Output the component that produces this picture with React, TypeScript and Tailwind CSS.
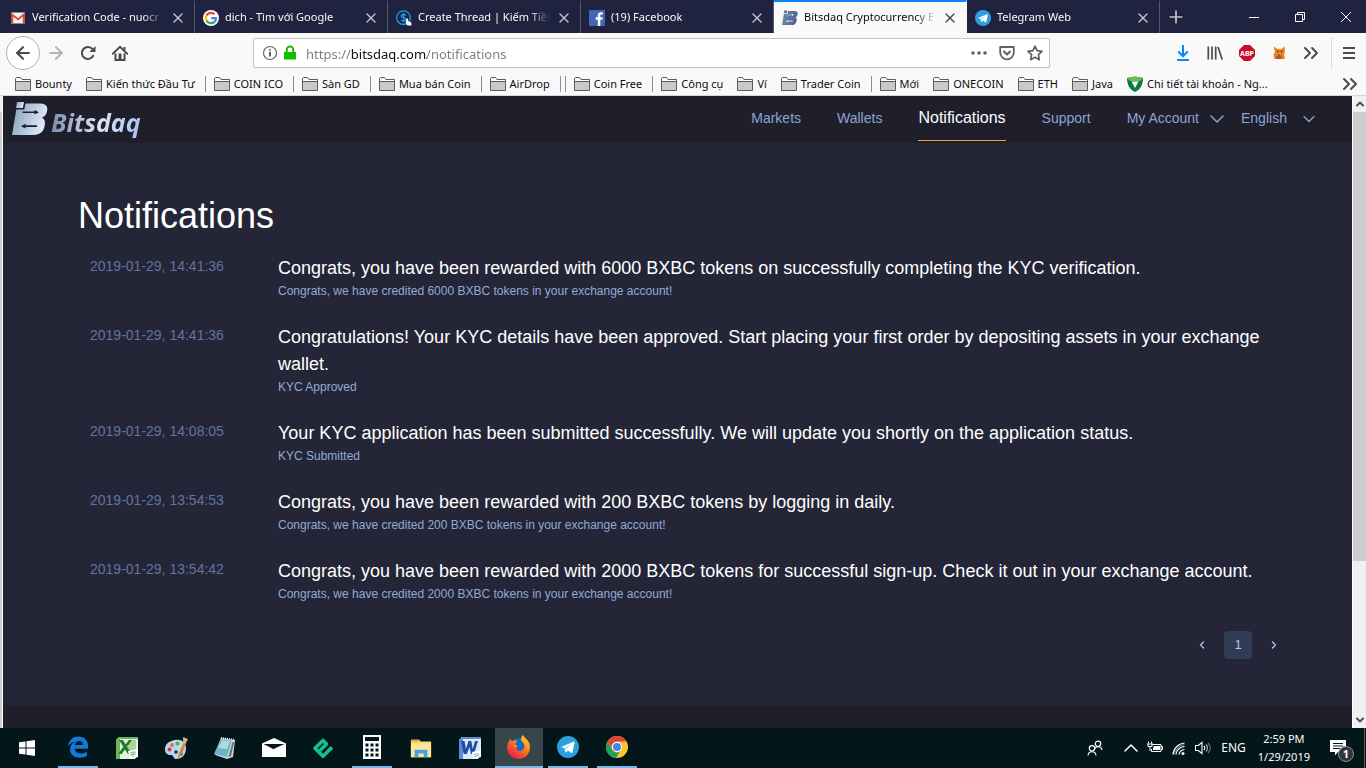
import type { ReactNode } from "react";
import { ArrowLeft, ArrowRight, ChevronDown, ChevronLeft, ChevronRight, ChevronUp, ChevronsRight, Plus, X } from "lucide-react";

const UI_FONT = "font-['Noto_Sans','Open_Sans',sans-serif]";
const PAGE_FONT = "font-['Liberation_Sans',Arial,sans-serif]";

/* ---------- Favicons ---------- */

function GmailIcon() {
  return (
    <svg viewBox="0 0 16 16" className="size-4">
      <path d="M1 2.5h14v11H1z" fill="#f2f2f2" />
      <path d="M1 13.5v-11L8 8l7-5.5v11h-2.2V6.6L8 10.4 3.2 6.6v6.9z" fill="#d54b3d" />
    </svg>
  );
}

function GoogleIcon() {
  return (
    <svg viewBox="0 0 16 16" className="size-4">
      <circle cx="8" cy="8" r="8" fill="#fff" />
      <g fill="none" strokeWidth="2.2">
        <path d="M11.6 4.3A5.1 5.1 0 0 0 3.5 5.6" stroke="#ea4335" />
        <path d="M3.5 5.6a5.1 5.1 0 0 0 0 4.8" stroke="#fbbc05" />
        <path d="M3.5 10.4a5.1 5.1 0 0 0 7.9 1.5" stroke="#34a853" />
        <path d="M11.4 11.9A5 5 0 0 0 13 8.1H8.2" stroke="#4285f4" />
      </g>
    </svg>
  );
}

function DollarIcon() {
  return (
    <svg viewBox="0 0 16 16" className="size-4">
      <circle cx="7.5" cy="7.7" r="6.8" fill="none" stroke="#1c9be6" strokeWidth="1.3" />
      <path d="M10 5.4C9 4.2 5.2 4 5.2 6c0 2.2 4.8 1.2 4.8 3.5 0 2-3.8 2-5 .4M7.6 3v9.4" fill="none" stroke="#1c9be6" strokeWidth="1.3" />
      <path d="M10.5 8.5l1.3 0 .6 3 2.8.8.3 3.2h-4l-1.800-2.500z" fill="#fff" />
    </svg>
  );
}

function FacebookIcon() {
  return (
    <svg viewBox="0 0 16 16" className="size-4">
      <path d="M0 0h16v16H0z" fill="#4267b2" />
      <path d="M8.8 16V9.8H6.7V7.3h2.1V5.5c0-2 1.2-3.2 3-3.2h1.9v2.3h-1.2c-1 0-1.2.5-1.2 1.2v1.5h2.4l-.4 2.5h-2V16z" fill="#fff" />
    </svg>
  );
}

function BitsdaqMark({ className, dark }: { className: string; dark?: boolean }) {
  return (
    <svg viewBox="0 0 36 34" className={className}>
      <defs>
        <linearGradient id={dark ? "mark-dark" : "mark-light"} x1="0" y1="0" x2="1" y2="0.3">
          <stop offset="0" stopColor={dark ? "#6f8fae" : "#7fa0b4"} />
          <stop offset="1" stopColor={dark ? "#4d6390" : "#dfe8fb"} />
        </linearGradient>
      </defs>
      <g fill={dark ? "url(#mark-dark)" : "url(#mark-light)"}>
        <path d="M5 0h7l-1.2 6H4z" />
        <path d="M13.5 1.5h15c5 0 7.5 3 6.7 7-.6 3.5-2.2 6-5.2 7 2.500 1.200 3.500 4 2.700 8-1 6-4.700 9.500-11.200 9.500H0L4.300 7.500h8z" />
      </g>
      <path d="M10.500 9.500h12V8l4.500 2.300-4.500 2.200V11h-12z" fill={dark ? "#f9f9fa" : "#1e1f2b"} />
      <path d="M25 23.300H13.500v-1.500L9 24.200l4.500 2.300V25H25z" fill={dark ? "#f9f9fa" : "#1e1f2b"} />
    </svg>
  );
}

function TelegramIcon({ className }: { className: string }) {
  return (
    <svg viewBox="0 0 24 24" className={className}>
      <circle cx="12" cy="12" r="12" fill="#2ba0dc" />
      <path d="M4.5 12l13.5-5.6c.8-.3 1.3.1 1.1 1l-2.2 10.4c-.2.9-.8 1-1.5.6l-3.4-2.5-1.9 1.8c-.4.4-.9.3-1-.3L8 13.3z" fill="#fff" />
      <path d="M8.6 13.2l7.2-4.5-5.5 5.6-.5 3z" fill="#b4d8ee" />
    </svg>
  );
}

/* ---------- Tabs ---------- */

interface Tab {
  title: string;
  icon: ReactNode;
  active?: boolean;
}

const TABS: Tab[] = [
  { title: "Verification Code - nuocr", icon: <GmailIcon /> },
  { title: "dich - Tìm với Google", icon: <GoogleIcon /> },
  { title: "Create Thread | Kiếm Tiền", icon: <DollarIcon /> },
  { title: "(19) Facebook", icon: <FacebookIcon /> },
  { title: "Bitsdaq Cryptocurrency E", icon: <BitsdaqMark className="size-4" dark />, active: true },
  { title: "Telegram Web", icon: <TelegramIcon className="size-4" /> },
];

function TabStrip() {
  return (
    <div className="flex h-[33px] bg-[#202340] pl-0.5 text-[#f9f9fa]">
      {TABS.map((tab) => (
        <div
          key={tab.title}
          className={
            tab.active
              ? "flex w-[193px] items-center gap-1.5 border-t-2 border-r border-[#0a84ff] border-r-transparent bg-[#f9f9fa] px-2 text-[#0c0c0d]"
              : "flex w-[193px] items-center gap-1.5 border-t-2 border-r border-t-transparent border-r-[#54566c] px-2"
          }
        >
          {tab.icon}
          <span className="min-w-0 flex-1 text-[11px] whitespace-nowrap [mask-image:linear-gradient(to_right,black_84%,transparent)]">
            {tab.title}
          </span>
          <button aria-label="Close tab">
            <X className="size-4 opacity-75" strokeWidth={2} />
          </button>
        </div>
      ))}
      <button aria-label="New tab" className="flex w-8 items-center justify-center">
        <Plus className="size-5 text-[#c3c4cd]" strokeWidth={2} />
      </button>
      <div className="ml-auto flex gap-1.5">
        <button aria-label="Minimize" className="flex w-10 items-center justify-center">
          <svg viewBox="0 0 10 10" className="size-2.5"><path d="M0 5.5h10" stroke="#fff" /></svg>
        </button>
        <button aria-label="Restore" className="flex w-10 items-center justify-center">
          <svg viewBox="0 0 10 10" className="size-2.5" fill="none" stroke="#fff">
            <path d="M.5 2.5h7v7h-7zM2.5 2.5v-2h7v7h-2" />
          </svg>
        </button>
        <button aria-label="Close" className="flex w-10 items-center justify-center">
          <svg viewBox="0 0 10 10" className="size-2.5"><path d="M0 0l10 10M10 0L0 10" stroke="#fff" /></svg>
        </button>
      </div>
    </div>
  );
}

/* ---------- Toolbar ---------- */

function NavToolbar() {
  return (
    <div className="flex h-10 items-center pl-1.5 text-[#4a4a4f]">
      <button aria-label="Back" className="flex size-[34px] items-center justify-center rounded-full border border-[#b1b1b1] bg-white">
        <ArrowLeft className="size-5" strokeWidth={2.5} />
      </button>
      <div className="flex items-center">
        <button aria-label="Forward" className="flex w-8 justify-center text-[#b5b5b7]">
          <ArrowRight className="size-5" strokeWidth={2.5} />
        </button>
        <button aria-label="Reload" className="flex w-8 justify-center">
          <svg viewBox="0 0 16 16" className="size-4">
            <path d="M13.5 10.2A6 6 0 1 1 12.6 4.2" fill="none" stroke="currentColor" strokeWidth="2" />
            <path d="M15.5 1v6H9.4z" fill="currentColor" />
          </svg>
        </button>
        <button aria-label="Home" className="flex w-8 justify-center">
          <svg viewBox="0 0 16 16" className="size-4">
            <path d="M.8 8.8L8 1.8l7.2 7" fill="none" stroke="currentColor" strokeWidth="1.9" strokeLinecap="round" />
            <path d="M3.5 8.5V15h9V8.5M12.5 5V2" fill="none" stroke="currentColor" strokeWidth="2" />
            <path d="M6.5 8.5h3V15h-3z" fill="currentColor" />
          </svg>
        </button>
      </div>
      <div className="mx-auto flex h-[30px] w-[797px] items-center rounded-xs border border-[#c4c4c4] bg-white px-1.5 pl-2 shadow-xs">
        <svg viewBox="0 0 16 16" className="size-4 shrink-0">
          <circle cx="8" cy="8" r="6.5" fill="none" stroke="#606064" strokeWidth="1.2" />
          <path d="M7 7h2v4.5H7zM7 4.2h2v1.6H7z" fill="#606064" />
        </svg>
        <svg viewBox="0 0 16 16" className="ml-1 size-4 shrink-0">
          <path d="M2 7h12v7.5H2z" fill="#12bc00" />
          <path d="M4.7 8V4.7a3.3 3.3 0 0 1 6.6 0V8" fill="none" stroke="#12bc00" strokeWidth="2" />
        </svg>
        {/* hard gradient stops keep the host darker than the rest of the address */}
        <input
          aria-label="Address"
          defaultValue="https://bitsdaq.com/notifications"
          className="ml-2 h-7 min-w-0 flex-1 bg-[linear-gradient(to_right,#7c7c80_45px,#0c0c0d_45px,#0c0c0d_121px,#7c7c80_121px)] bg-clip-text pt-0.5 text-[13px] text-transparent caret-black outline-none"
        />
        <div className="flex items-center gap-3 text-[#606064]">
          <svg viewBox="0 0 16 16" className="size-4" fill="currentColor">
            <circle cx="2" cy="8" r="1.8" /><circle cx="8" cy="8" r="1.8" /><circle cx="14" cy="8" r="1.8" />
          </svg>
          <svg viewBox="0 0 16 16" className="size-4" fill="none" stroke="currentColor" strokeWidth="1.8" strokeLinecap="round" strokeLinejoin="round">
            <path d="M1.2 2h13.6v5.5a6.8 6.8 0 0 1-13.6 0z" />
            <path d="M5 6.5l3 3 3-3" strokeWidth="2" />
          </svg>
          <svg viewBox="0 0 16 16" className="size-4" fill="none" stroke="currentColor" strokeWidth="1.7" strokeLinejoin="round">
            <path d="M8 1.2l2.1 4.5 4.9.6-3.6 3.4.9 5L8 12.3l-4.3 2.4.9-5L1 6.3l4.9-.6z" />
          </svg>
        </div>
      </div>
      <div className="flex items-center">
        <button aria-label="Downloads" className="flex w-8 justify-center">
          <svg viewBox="0 0 16 16" className="size-4" fill="none" stroke="#0a84ff" strokeWidth="2">
            <path d="M8 0v11M3.2 6.5L8 11.3l4.8-4.8M2 15h12" />
          </svg>
        </button>
        <button aria-label="Library" className="flex w-8 justify-center">
          <svg viewBox="0 0 16 16" className="size-4" fill="none" stroke="currentColor" strokeWidth="1.7">
            <path d="M1.3 1.5v13M5 1.5v13M8.7 1.5v13M11 2l4.2 12.5" />
          </svg>
        </button>
        <button aria-label="Adblock Plus" className="flex w-8 justify-center">
          <svg viewBox="0 0 16 16" className="size-4">
            <path d="M5 0h6l5 5v6l-5 5H5l-5-5V5z" fill="#c70d2c" />
            <text x="8" y="10.5" textAnchor="middle" fontSize="7" fontWeight="700" fill="#fff">ABP</text>
          </svg>
        </button>
        <button aria-label="Extension" className="flex w-8 justify-center">
          <svg viewBox="0 0 16 16" className="size-4">
            <path d="M2.5 1.5l4 2.5 4 0 3-2.5.5 5-1 3 1 4.5H3.5L2.5 10 4 7z" fill="#e8831d" />
            <path d="M5 12l3-3 3 3-1 2H5z" fill="#a85d2b" />
            <path d="M6 6.5h1.5M10 6.5h1.5" stroke="#4b2a13" />
          </svg>
        </button>
        <button aria-label="More tools" className="flex w-8 justify-center">
          <ChevronsRight className="size-6" strokeWidth={2} />
        </button>
        <div className="ml-1 flex h-8 w-[35px] items-center justify-center border-l border-[#dcdcdd]">
          <button aria-label="Menu">
            <svg viewBox="0 0 16 16" className="size-4"><path d="M2 3h12M2 8h12M2 13h12" stroke="currentColor" strokeWidth="2" /></svg>
          </button>
        </div>
      </div>
    </div>
  );
}

/* ---------- Bookmarks ---------- */

// "|" stands for a separator
const BOOKMARKS = [
  "Bounty", "Kiến thức Đầu Tư", "|", "COIN ICO", "|", "Sàn GD", "|", "Mua bán Coin", "|", "AirDrop", "|", "|",
  "Coin Free", "|", "Công cụ", "Ví", "Trader Coin", "|", "Mới", "ONECOIN", "ETH", "Java",
];

function FolderIcon() {
  return (
    <svg viewBox="0 0 16 14" className="h-3.5 w-4 shrink-0">
      <path d="M.5 13.5V1.5L1.5.5h4l1.5 2h8.5v11z" fill="#c9c9cb" stroke="#5b5b5e" />
      <path d="M1 4.5h14V3H6.5l-1-1.800H1.600L1 2z" fill="#fff" />
      <path d="M1 4.5h14.5" stroke="#5b5b5e" />
    </svg>
  );
}

function BookmarksBar() {
  return (
    <div className="flex h-[23px] items-center border-b border-[#d5d5d7] pr-1 pl-[15px] text-[11px] text-[#0c0c0d]">
      {BOOKMARKS.map((name, i) =>
        name === "|" ? (
          <span key={i} className="-ml-1 mr-2 h-4 w-px shrink-0 bg-[#8f8f91]" />
        ) : (
          <a key={i} href="#" className="mr-3.5 flex shrink-0 items-center gap-1 whitespace-nowrap">
            <FolderIcon />
            {name}
          </a>
        ),
      )}
      <a href="#" className="flex items-center gap-1 whitespace-nowrap">
        <svg viewBox="0 0 16 16" className="size-4">
          <path d="M0 2l8-1.5L16 2c0 7-3 12-8 14C3 14 0 9 0 2z" fill="#0b7a41" />
          <path d="M0 2l8-1.5L16 2 13 5H3z" fill="#6cc04a" />
          <path d="M4.5 5.5h7L8 12z" fill="#fff" />
        </svg>
        Chi tiết tài khoản - Ng...
      </a>
      <button aria-label="More bookmarks" className="ml-auto">
        <ChevronsRight className="size-6 text-[#4a4a4f]" strokeWidth={2} />
      </button>
    </div>
  );
}

/* ---------- Site ---------- */

function SiteHeader() {
  return (
    <header className="flex h-[47px] items-start justify-between bg-[#1e1f2b] pr-[33px] pl-[9px]">
      <a href="#" aria-label="Bitsdaq" className="flex pt-1.5">
        <BitsdaqMark className="h-[34px] w-9" />
        <span className="ml-[3px] bg-gradient-to-r from-[#7d8bb0] via-[#dfe6fa] to-[#a5bfee] bg-clip-text pt-1 pr-1 font-['Open_Sans','Noto_Sans',sans-serif] text-[25px] leading-8 font-bold text-transparent italic">
          Bitsdaq
        </span>
      </a>
      <nav className="flex h-[45px] items-center text-[14px] text-[#8ea3d1]">
        <a href="#" className="mr-9">Markets</a>
        <a href="#" className="mr-9">Wallets</a>
        <a href="#" className="mr-9 flex h-full items-center border-b border-[#f5a031] text-[16px] text-white">
          Notifications
        </a>
        <a href="#" className="mr-9">Support</a>
        <button className="mr-3 flex items-center gap-1.5">
          My Account
          <ChevronDown className="size-6" strokeWidth={1.5} />
        </button>
        <select aria-label="Language" className="w-[58px] appearance-none bg-transparent">
          <option>English</option>
        </select>
        <ChevronDown className="size-5" strokeWidth={1.5} />
      </nav>
    </header>
  );
}

interface Notification {
  time: string;
  title: string;
  detail: string;
}

const NOTIFICATIONS: Notification[] = [
  {
    time: "2019-01-29, 14:41:36",
    title: "Congrats, you have been rewarded with 6000 BXBC tokens on successfully completing the KYC verification.",
    detail: "Congrats, we have credited 6000 BXBC tokens in your exchange account!",
  },
  {
    time: "2019-01-29, 14:41:36",
    title:
      "Congratulations! Your KYC details have been approved. Start placing your first order by depositing assets in your exchange wallet.",
    detail: "KYC Approved",
  },
  {
    time: "2019-01-29, 14:08:05",
    title: "Your KYC application has been submitted successfully. We will update you shortly on the application status.",
    detail: "KYC Submitted",
  },
  {
    time: "2019-01-29, 13:54:53",
    title: "Congrats, you have been rewarded with 200 BXBC tokens by logging in daily.",
    detail: "Congrats, we have credited 200 BXBC tokens in your exchange account!",
  },
  {
    time: "2019-01-29, 13:54:42",
    title: "Congrats, you have been rewarded with 2000 BXBC tokens for successful sign-up. Check it out in your exchange account.",
    detail: "Congrats, we have credited 2000 BXBC tokens in your exchange account!",
  },
];

function NotificationList() {
  return (
    <main className="flex-1 bg-[#242637] pt-[46px] pr-16 pb-[46px] pl-[75px]">
      <h1 className="text-[36px] leading-[54px] text-white">Notifications</h1>
      <ul className="mt-3 pl-3">
        {NOTIFICATIONS.map((n, i) => (
          <li key={i} className="mb-6 flex">
            <time className="w-[188px] shrink-0 text-[14px] leading-[22px] text-[#62739f]">{n.time}</time>
            <div>
              <h2 className="text-[18px] leading-[27px] text-white">{n.title}</h2>
              <p className="text-[12px] leading-[18px] text-[#93a9d6]">{n.detail}</p>
            </div>
          </li>
        ))}
      </ul>
      <div className="mt-7 flex justify-end gap-2 text-[13px] text-[#b9c6e2]">
        <button aria-label="Previous page" className="flex size-7 items-center justify-center">
          <ChevronLeft className="size-3" strokeWidth={2.5} />
        </button>
        <button className="size-7 rounded-sm bg-[#2e3c54]">1</button>
        <button aria-label="Next page" className="flex size-7 items-center justify-center">
          <ChevronRight className="size-3" strokeWidth={2.5} />
        </button>
      </div>
    </main>
  );
}

function Scrollbar() {
  return (
    <div className="flex w-3.5 flex-col border-l border-white bg-[#f0f0f0] text-[#505050]">
      <button aria-label="Scroll up" className="flex h-4 items-center justify-center">
        <ChevronUp className="size-3" strokeWidth={4} />
      </button>
      <div className="flex-1">
        <div className="h-[449px] bg-[#cdcdcd]" />
      </div>
      <button aria-label="Scroll down" className="flex h-4 items-center justify-center">
        <ChevronDown className="size-3" strokeWidth={4} />
      </button>
    </div>
  );
}

/* ---------- Taskbar ---------- */

interface TaskItem {
  name: string;
  open?: boolean;
  active?: boolean;
  icon: ReactNode;
}

const TASKS: TaskItem[] = [
  {
    name: "Edge",
    open: true,
    icon: (
      <svg viewBox="0 0 24 24" className="size-[22px]">
        <path d="M1 11C2 4 7 .5 12.5.5 19 .5 23 5 23 11v3H8.5c.2 3.5 3.2 5 6.5 5 2.5 0 4.8-.7 6.8-1.9v4.7c-2 1.2-5 1.8-8 1.8-6 0-10.5-3.5-10.5-9 0-4 2.2-6.7 5.5-8.3C5.5 7 3 8.2 1 11zm7.6-1.300h8.600c0-2.800-1.400-4.300-4-4.300-2.300 0-4.100 1.500-4.600 4.300z" fill="#0f7ad8" />
      </svg>
    ),
  },
  {
    name: "Excel",
    icon: (
      <svg viewBox="0 0 24 24" className="size-6">
        <path d="M4 1h19v18l-3 4H1V4z" fill="#e4f3df" />
        <path d="M1 4l3-3h19v2H5v20H1z" fill="#6bb55c" />
        <path d="M13 4h8v11h-8z" fill="#a9d79b" />
        <path d="M4 4h4l2.6 4.2L14 4h3l-4.900 6.800L17 18h-4.200L10 13.400 6.700 18H3.200l5-7.200z" fill="#257d2c" />
        <path d="M13 15l10-2v8l-8 2z" fill="#fff" />
        <path d="M15 17l6-1M15 19l6-1M18 15v6" stroke="#88bb80" />
      </svg>
    ),
  },
  {
    name: "Paint",
    icon: (
      <svg viewBox="0 0 24 24" className="size-6">
        <path d="M11 4c6-1 11 2 11 8 0 7-4 11-10 11-3 0-2-4-5-4-4 0-6-2-6-6 0-5 4-8 10-9z" fill="#b8d8ee" />
        <circle cx="5.5" cy="13.5" r="2" fill="#d33b32" />
        <circle cx="8" cy="9" r="2" fill="#e7782c" />
        <circle cx="13.5" cy="7.5" r="2" fill="#58ae40" />
        <circle cx="12" cy="16" r="1.8" fill="#123446" />
        <circle cx="17" cy="18" r="2" fill="#367fc9" />
        <path d="M13.5 23l1.5-6 5-11 2 1-4 11z" fill="#d98324" />
        <path d="M19 1l5 2-2.5 5-2.300-1z" fill="#d9b083" />
      </svg>
    ),
  },
  {
    name: "Notepad",
    icon: (
      <svg viewBox="0 0 24 24" className="size-6">
        <path d="M8 2l14 2-2 17-6 2L2 19z" fill="#cfd4d6" />
        <path d="M8 2l11 1.5L14 21 1 18z" fill="#6fb3c6" />
        <path d="M9 4l8 1-3 8-9-1z" fill="#a9dce5" />
        <path d="M8 2l14 2" stroke="#f2f2f2" strokeWidth="2" strokeDasharray="1 1" />
        <path d="M15.5 21l4-15 1.5.5L18 20z" fill="#5c7077" />
      </svg>
    ),
  },
  {
    name: "Mail",
    icon: (
      <svg viewBox="0 0 24 20" className="h-5 w-6">
        <path d="M0 5.5L12 0l12 5.5V19H0z" fill="#fff" />
        <path d="M1.5 6h21L11.5 11 18 14.5z" fill="#03161a" />
      </svg>
    ),
  },
  {
    name: "eToro",
    icon: (
      <svg viewBox="0 0 24 24" className="size-6" fill="none" stroke="#13c38d" strokeWidth="3.6" strokeLinejoin="round">
        <path d="M9 14.5l6.5-6.500-3.500-3.500L4 12.200l8 8 9-9" />
      </svg>
    ),
  },
  {
    name: "Calculator",
    open: true,
    icon: (
      <svg viewBox="0 0 18 24" className="h-6 w-[18px]">
        <path d="M0 0h18v24H0z" fill="#fff" />
        <path d="M2 2h14v4H2z" fill="#03161a" />
        <path d="M2.5 10h14M2.5 15h14M2.5 20h14" stroke="#03161a" strokeWidth="3" strokeDasharray="3 2" />
      </svg>
    ),
  },
  {
    name: "File Explorer",
    icon: (
      <svg viewBox="0 0 24 24" className="size-[22px]">
        <path d="M1 3h9l1.5 2H23v17H1z" fill="#fbd978" />
        <path d="M1 3h9v2H1z" fill="#e9a92e" />
        <path d="M1 7h22v15H1z" fill="#ffe596" />
        <path d="M5 14h14v8h-4v-4H9v4H5z" fill="#3ba7e3" />
      </svg>
    ),
  },
  {
    name: "Word",
    icon: (
      <svg viewBox="0 0 24 24" className="size-6">
        <path d="M4 1h19v18l-3 4H1V4z" fill="#dbe8f8" />
        <path d="M1 4l3-3h19v2H5v20H1z" fill="#5f8bd0" />
        <path d="M3 5h3.5l1.4 8L10.5 5h2.800l1.500 8L17 5h3l-4 13h-3l-1.500-7-2.700 7H5.700z" fill="#1f4fa5" />
        <path d="M14 16l9-2v7l-8 2z" fill="#fff" />
        <path d="M16 18.5l5-1M16 20.5l5-1" stroke="#8aa8d5" />
      </svg>
    ),
  },
  {
    name: "Firefox",
    open: true,
    active: true,
    icon: (
      <svg viewBox="0 0 24 24" className="size-6">
        <defs>
          <linearGradient id="fox" x1="0.9" y1="0" x2="0.2" y2="1">
            <stop offset="0" stopColor="#ffe226" />
            <stop offset="0.45" stopColor="#ff7d1a" />
            <stop offset="1" stopColor="#e5134f" />
          </linearGradient>
        </defs>
        <circle cx="12" cy="12.5" r="9.5" fill="#1668c9" />
        <path d="M1 8l2-4 2 2.3C7 5 9 5 10.5 6L8 9.5l3 1.5-2 2.5c1.5 3.5 6.5 3 8-.5 1-3-.5-5-2.500-7C13.500 4.500 14 2 16 0c1 3 7 5 7 12 0 7-5 12-11.500 12S0 19 0 12.500C0 11 .4 9.500 1 8z" fill="url(#fox)" />
        <path d="M7 10l3 .5-1.5 1.5z" fill="#ffd32c" />
      </svg>
    ),
  },
  { name: "Telegram", open: true, icon: <TelegramIcon className="size-[22px]" /> },
  {
    name: "Chrome",
    open: true,
    icon: (
      <svg viewBox="0 0 24 24" className="size-[22px]">
        <circle cx="12" cy="12" r="12" fill="#fbc32d" />
        <path d="M12 0a12 12 0 0 1 10.4 6H12a6 6 0 0 0-5.2 9L1.600 6A12 12 0 0 1 12 0z" fill="#dc4437" />
        <path d="M1.6 6l5.2 9a6 6 0 0 0 8 2.300L11 24A12 12 0 0 1 1.600 6z" fill="#1ba15f" />
        <circle cx="12" cy="12" r="5.5" fill="#fff" />
        <circle cx="12" cy="12" r="4.4" fill="#4285f4" />
      </svg>
    ),
  },
];

function TaskButton({ item }: { item: TaskItem }) {
  return (
    <button
      aria-label={item.name}
      className={item.active ? "flex w-12 flex-col items-center bg-[#37464a]" : "flex w-12 flex-col items-center"}
    >
      <span className="flex flex-1 items-center">{item.icon}</span>
      {item.open && <span className={item.active ? "h-0.5 w-full bg-[#76b9ed]" : "h-0.5 w-10 bg-[#76b9ed]"} />}
    </button>
  );
}

function Taskbar() {
  return (
    <footer className="flex h-10 bg-[#03161a] pl-[3px] text-[12px] text-white">
      <button aria-label="Start" className="mr-[3px] flex w-12 items-center justify-center">
        <svg viewBox="0 0 16 16" className="size-4" fill="#fff">
          <path d="M0 2.3L6.5 1.4v6.1H0zM7.5 1.2L16 0v7.5H7.5zM0 8.5h6.5v6.1L0 13.7zM7.5 8.5H16V16l-8.5-1.2z" />
        </svg>
      </button>
      <div className="flex gap-px">
        {TASKS.map((item) => (
          <TaskButton key={item.name} item={item} />
        ))}
      </div>
      <div className="ml-auto flex items-center pr-px">
        <svg viewBox="0 0 16 16" className="mr-4 size-4" fill="none" stroke="#fff" strokeWidth="1.2">
          <circle cx="11" cy="3.8" r="2.7" />
          <path d="M7.5 9.5c.5-3.5 6.5-4 7.5.5" />
          <circle cx="5" cy="8.3" r="2.7" />
          <path d="M1 15.5c.5-5 7.5-5 8 0" />
        </svg>
        <ChevronUp className="mr-1 size-6" strokeWidth={1.5} />
        <svg viewBox="0 0 16 16" className="mr-2 size-4" fill="none" stroke="#fff">
          <path d="M5.5 4.5H14v7H4.5V9" />
          <path d="M14 6.5h1.5v3H14" />
          <path d="M7 6h6v4H6V8z" fill="#fff" stroke="none" />
          <path d="M1.5 1.5v2M4.5 1.5v2M0 4h6M1 4v2.5h4V4M3 7v4" />
        </svg>
        <svg viewBox="0 0 16 16" className="mr-2 size-4" fill="none" stroke="#fff" strokeWidth="1.2">
          <path d="M2 14.5A12.5 12.5 0 0 1 13.5 3M5 14.5A9 9 0 0 1 13.5 6.5M8 14.5a6 6 0 0 1 5.5-5" />
          <path d="M3.5 15A11 11 0 0 1 13.5 4.7" opacity="0.4" />
          <circle cx="12" cy="13.5" r="1.5" fill="#fff" stroke="none" />
        </svg>
        <svg viewBox="0 0 16 16" className="mr-2.5 size-4" fill="none" stroke="#fff" strokeWidth="1.1">
          <path d="M.5 5.5h2.8L7 2.5v11l-3.7-3H.5z" />
          <path d="M9 6c1 1 1 3 0 4" />
          <path d="M11 4.5c2 2 2 5 0 7" opacity="0.7" />
          <path d="M13 3c3 3 3 7 0 10" opacity="0.4" />
        </svg>
        <span className="mr-3">ENG</span>
        <div className="mr-5 text-center text-[11px] leading-[18px]">
          <div>2:59 PM</div>
          <div>1/29/2019</div>
        </div>
        <button aria-label="Notifications" className="relative mr-2.5 flex size-6 items-center">
          <svg viewBox="0 0 16 16" className="size-4" fill="#fff">
            <path d="M0 0h16v12H8l-3 3.5V12H0z" />
            <path d="M3 3.5h10M3 6h10M3 8.500h7" stroke="#03161a" />
          </svg>
          <span className="absolute top-2.5 left-2 flex size-4 items-center justify-center rounded-full border border-[#8b8f90] bg-[#303538] text-[11px] font-bold">
            1
          </span>
        </button>
        <span className="h-10 w-px bg-[#50605f]" />
      </div>
    </footer>
  );
}

export default function App() {
  return (
    <div className={`flex min-h-screen flex-col ${UI_FONT}`}>
      <TabStrip />
      <div className="bg-[#f9f9fa]">
        <NavToolbar />
        <BookmarksBar />
      </div>
      <div className="flex flex-1">
        <div className="w-[3px] border-t-16 border-r border-t-[#f0f0f0] border-r-white bg-[#cdcdcd]" />
        <div className={`flex flex-1 flex-col ${PAGE_FONT}`}>
          <SiteHeader />
          <NotificationList />
          <div className="h-[23px] bg-[#1e1f2b]" />
        </div>
        <Scrollbar />
      </div>
      <Taskbar />
    </div>
  );
}
